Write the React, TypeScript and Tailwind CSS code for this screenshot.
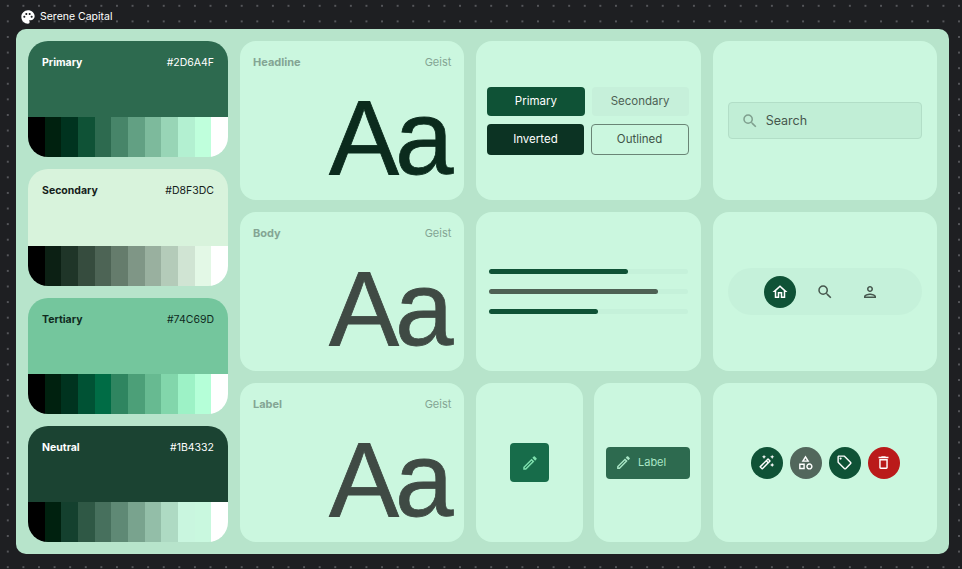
import { ReactNode } from 'react'
import {
  MdOutlineAutoFixHigh,
  MdOutlineCategory,
  MdOutlineDelete,
  MdOutlineEdit,
  MdOutlineHome,
  MdOutlinePerson,
  MdOutlineSell,
  MdPalette,
  MdSearch
} from 'react-icons/md'

interface PaletteCardProps {
  name: string
  hex: string
  headClass: string
  tones: string[]
}

const palettes: PaletteCardProps[] = [
  {
    name: 'Primary',
    hex: '#2D6A4F',
    headClass: 'bg-[#2d6a4f] text-white',
    tones: ['#000000', '#00210f', '#00331f', '#0f5236', '#2d6a4f', '#478569', '#62a083', '#7dba9c', '#98d5b6', '#b3f0d1', '#bfffdc', '#ffffff']
  },
  {
    name: 'Secondary',
    hex: '#D8F3DC',
    headClass: 'bg-[#d8f3dc] text-[#14201a]',
    tones: ['#000000', '#0c2014', '#1f3528', '#364c3e', '#4d6455', '#657c6c', '#7f9686', '#99b09f', '#b4cbb9', '#d0e4d3', '#e3f8e6', '#ffffff']
  },
  {
    name: 'Tertiary',
    hex: '#74C69D',
    headClass: 'bg-[#74c69d] text-[#0f2a1d]',
    tones: ['#000000', '#00210f', '#00331f', '#005234', '#006c45', '#2f8560', '#4c9f78', '#67ba91', '#82d6ab', '#9df2c6', '#b5ffd8', '#ffffff']
  },
  {
    name: 'Neutral',
    hex: '#1B4332',
    headClass: 'bg-[#1b4332] text-white',
    tones: ['#000000', '#00210f', '#14402e', '#2f5845', '#47705d', '#5f8975', '#79a38e', '#93bea8', '#aedac3', '#c9f6df', '#c9f8df', '#ffffff']
  }
]

function PaletteCard({ name, hex, headClass, tones }: PaletteCardProps) {
  return (
    <div className="flex-1 flex flex-col rounded-[20px] overflow-hidden">
      <div className={`flex-1 flex justify-between items-start px-[14px] pt-[15px] text-[10.5px] ${headClass}`}>
        <span className="font-bold leading-[14px]">{name}</span>
        <span className="leading-[14px]">{hex}</span>
      </div>
      <div className="flex h-[40px]">
        {tones.map((tone, i) => (
          <div key={i} className="flex-1" style={{ backgroundColor: tone }} />
        ))}
      </div>
    </div>
  )
}

function Card({ children, className = '' }: { children: ReactNode; className?: string }) {
  return <div className={`bg-[#cbf7df] rounded-[16px] ${className}`}>{children}</div>
}

function TypeCard({ label, color }: { label: string; color: string }) {
  return (
    <Card className="flex flex-col px-[13px] pt-[14px]">
      <div className="flex justify-between text-[11px] leading-[14px] text-[#84a594]">
        <span className="font-bold">{label}</span>
        <span>Geist</span>
      </div>
      <div
        className={`mt-auto mb-[4px] mr-[2px] text-right text-[105px] leading-[116px] tracking-[-4px] [-webkit-text-stroke:0.8px_currentColor] font-['Liberation_Sans',sans-serif] ${color}`}
      >
        Aa
      </div>
    </Card>
  )
}

const bars = [
  { fill: 'w-[70%] bg-[#0f5236]' },
  { fill: 'w-[85%] bg-[#4e6154]' },
  { fill: 'w-[55%] bg-[#0f5236]' }
]

function ActionButton({ className, children }: { className: string; children: ReactNode }) {
  return (
    <button className={`flex items-center justify-center rounded-[4px] pt-[1px] text-[11.5px] ${className}`}>
      {children}
    </button>
  )
}

function RoundIcon({ className, children }: { className: string; children: ReactNode }) {
  return (
    <div className={`w-[32px] h-[32px] rounded-full flex items-center justify-center text-white ${className}`}>
      {children}
    </div>
  )
}

export default function App() {
  return (
    <div className="w-[962px] h-[569px] flex flex-col overflow-hidden bg-[#1e1f22] bg-[radial-gradient(circle,#55565a_1px,transparent_1.2px)] bg-[length:15.6px_15.6px] bg-[position:0px_-2px] font-['Inter',sans-serif]">
      <div className="h-[29px] shrink-0 flex items-center pl-[20px] pt-[4px] gap-[4px] text-white text-[10.5px]">
        <MdPalette size={16} />
        <span>Serene Capital</span>
      </div>

      <div className="ml-[16px] mr-[13px] mb-[15px] flex-1 min-h-0 bg-[#b7e4cb] rounded-[10px] p-[12px] grid grid-cols-[200px_repeat(3,1fr)] grid-rows-3 gap-[12px]">
        <div className="row-span-3 flex flex-col gap-[12px]">
          {palettes.map((p) => (
            <PaletteCard key={p.name} {...p} />
          ))}
        </div>

        <TypeCard label="Headline" color="text-[#0b2b1d]" />

        <Card className="flex flex-col justify-center gap-[8px] pl-[11px] pr-[12px]">
          <div className="flex gap-[7px]">
            <ActionButton className="flex-1 h-[29px] bg-[#0f5236] text-white">Primary</ActionButton>
            <ActionButton className="flex-1 h-[29px] bg-[#c6f0da] text-[#4e6154]">Secondary</ActionButton>
          </div>
          <div className="flex gap-[7px]">
            <ActionButton className="flex-1 h-[31px] bg-[#0c3323] text-white">Inverted</ActionButton>
            <ActionButton className="flex-1 h-[31px] border border-[#6a8576] text-[#3f5448]">Outlined</ActionButton>
          </div>
        </Card>

        <Card className="flex items-center px-[15px]">
          <div className="w-full h-[37px] flex items-center gap-[7px] px-[12px] pt-[1px] bg-[#c1eed6] border border-[#b2dec7] rounded-[4px] text-[12.5px] text-[#46574d]">
            <MdSearch size={18} className="text-[#7f9f8e]" />
            <span>Search</span>
          </div>
        </Card>

        <TypeCard label="Body" color="text-[#3f4a44]" />

        <Card className="flex flex-col justify-center gap-[15px] px-[13px]">
          {bars.map((bar, i) => (
            <div key={i} className="h-[5px] rounded-full bg-[#c5f1da]">
              <div className={`h-full rounded-full ${bar.fill}`} />
            </div>
          ))}
        </Card>

        <Card className="flex items-center px-[15px]">
          <div className="w-full h-[47px] flex items-center pl-[36px] gap-[20px] bg-[#c5f1da] rounded-[24px] text-[#46574d]">
            <RoundIcon className="bg-[#0f5236]">
              <MdOutlineHome size={18} />
            </RoundIcon>
            <MdSearch size={18} />
            <MdOutlinePerson size={18} className="ml-[7px]" />
          </div>
        </Card>

        <TypeCard label="Label" color="text-[#3f4a44]" />

        <div className="flex gap-[11px]">
          <Card className="w-[107px] flex items-center justify-center">
            <div className="w-[39px] h-[39px] rounded-[4px] bg-[#176c4a] flex items-center justify-center text-[#7fe0ae]">
              <MdOutlineEdit size={18} />
            </div>
          </Card>
          <Card className="flex-1 flex items-center justify-center pl-[1px]">
            <div className="w-[84px] h-[32px] rounded-[4px] bg-[#2d6a4f] flex items-center gap-[6px] pl-[9px] text-[11px] text-[#a9e6c6]">
              <MdOutlineEdit size={17} />
              <span>Label</span>
            </div>
          </Card>
        </div>

        <Card className="flex items-center justify-center gap-[7px] pl-[1px]">
          <RoundIcon className="bg-[#0f5236]">
            <MdOutlineAutoFixHigh size={17} />
          </RoundIcon>
          <RoundIcon className="bg-[#52675c]">
            <MdOutlineCategory size={17} />
          </RoundIcon>
          <RoundIcon className="bg-[#0f5236]">
            <MdOutlineSell size={17} />
          </RoundIcon>
          <RoundIcon className="bg-[#ba1a1a]">
            <MdOutlineDelete size={17} />
          </RoundIcon>
        </Card>
      </div>
    </div>
  )
}
